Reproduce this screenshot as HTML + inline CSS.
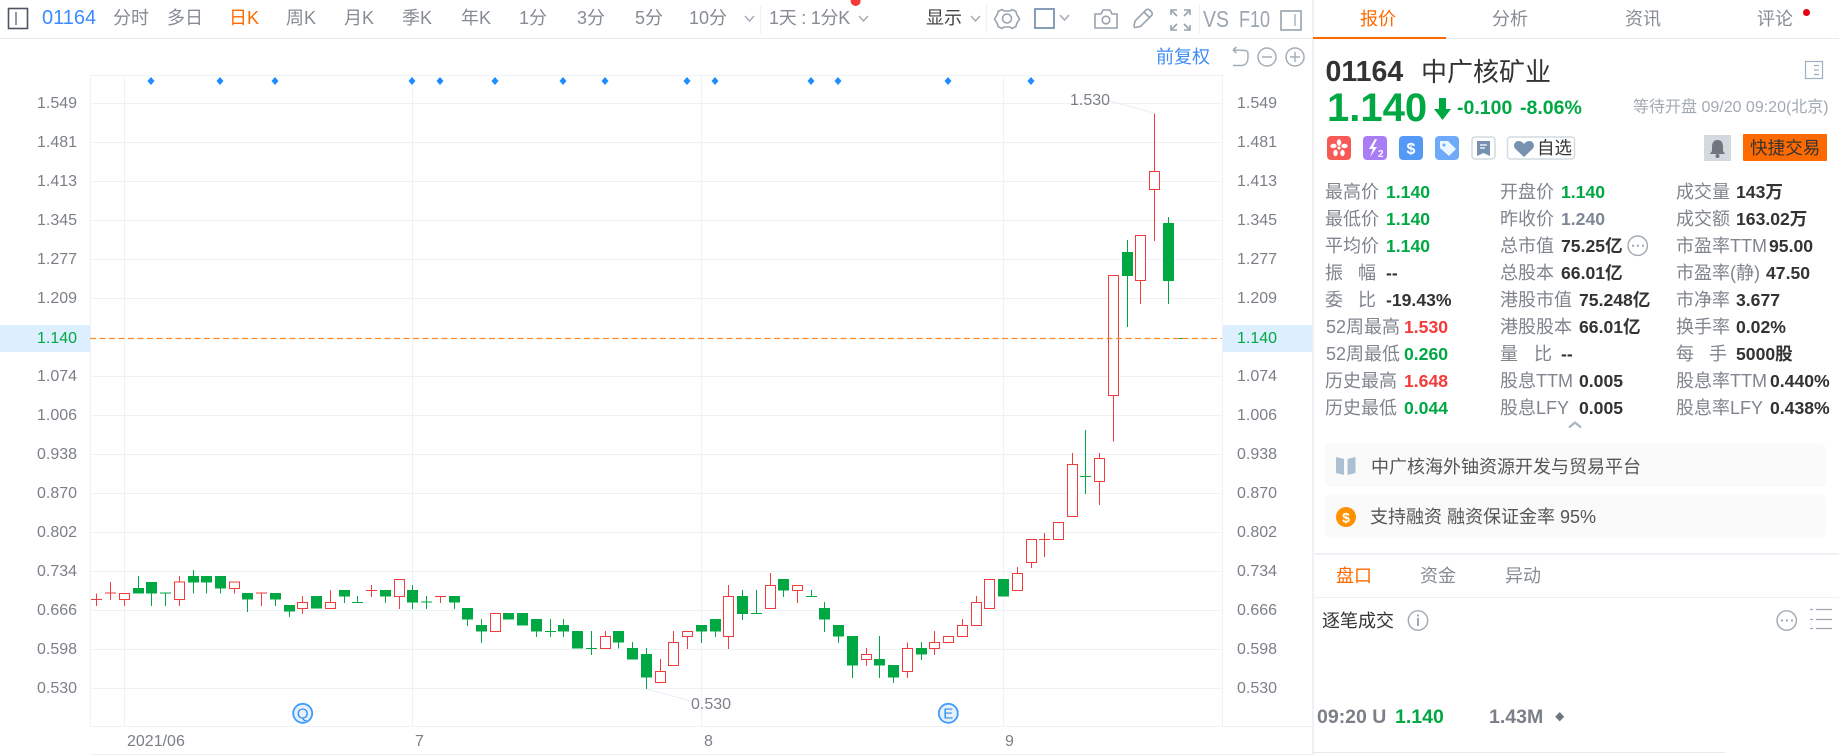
<!DOCTYPE html>
<html lang="zh"><head><meta charset="utf-8"><title>01164</title>
<style>
html,body{margin:0;padding:0;background:#fff;width:1839px;height:755px;overflow:hidden}
body{position:relative;font-family:"Liberation Sans","Noto Sans CJK SC",sans-serif;color:#333}
.t{position:absolute;white-space:nowrap;line-height:20px;font-size:18px}
.n{color:#868b94}.o{color:#ff6a00}.g{color:#00a843}.r{color:#f53a3a}
.a{font-size:16px;color:#7b7f87;margin-top:1px}
.l{color:#7f848d}.v{font-weight:bold;color:#333;font-size:17.6px}
.vg{font-weight:bold;color:#00a843;font-size:17.6px}.vr{font-weight:bold;color:#f53a3a;font-size:17.6px}
svg{position:absolute;left:0;top:0}
</style></head><body>

<svg width="1839" height="755" viewBox="0 0 1839 755" fill="none">
<!-- hilite bands -->
<rect x="0" y="325" width="90" height="27" fill="#ddeeff"/>
<rect x="1223" y="325" width="89" height="27" fill="#ddeeff"/>
<!-- structural lines -->
<g fill="#eef2f6" shape-rendering="crispEdges">
<rect x="0" y="38" width="1839" height="1" fill="#e6ebf0"/>
<rect x="90" y="75" width="1132" height="1"/>
<rect x="90" y="103" width="1132" height="1"/><rect x="90" y="142" width="1132" height="1"/>
<rect x="90" y="181" width="1132" height="1"/><rect x="90" y="220" width="1132" height="1"/>
<rect x="90" y="259" width="1132" height="1"/><rect x="90" y="298" width="1132" height="1"/>
<rect x="90" y="376" width="1132" height="1"/><rect x="90" y="415" width="1132" height="1"/>
<rect x="90" y="454" width="1132" height="1"/><rect x="90" y="493" width="1132" height="1"/>
<rect x="90" y="532" width="1132" height="1"/><rect x="90" y="571" width="1132" height="1"/>
<rect x="90" y="610" width="1132" height="1"/><rect x="90" y="649" width="1132" height="1"/>
<rect x="90" y="688" width="1132" height="1"/>
<rect x="90" y="726" width="1222" height="1"/><rect x="90" y="754" width="1222" height="1"/>
<rect x="90" y="75" width="1" height="652"/><rect x="124" y="75" width="1" height="652"/>
<rect x="412" y="75" width="1" height="652"/><rect x="701" y="75" width="1" height="652"/>
<rect x="1003" y="75" width="1" height="652"/><rect x="1222" y="75" width="1" height="652"/>
<rect x="1312" y="0" width="2" height="755"/>
<rect x="760" y="6" width="1" height="28"/><rect x="986" y="4" width="1" height="30"/><rect x="1199" y="4" width="1" height="30"/>
<rect x="1314" y="553" width="525" height="2"/><rect x="1314" y="597" width="525" height="1"/>
<rect x="1314" y="752" width="411" height="1" fill="#e6ebf0"/>
<rect x="1313" y="37" width="133" height="2" fill="#ff6a00"/>
</g>
<!-- leaders -->
<path d="M1110 101L1154 113M647 689L691 701" stroke="#e8edf3" stroke-width="1"/>

<!-- candles -->
<g shape-rendering="crispEdges">
<g transform="translate(90,530) scale(.33333)">
<path stroke="#00a843" stroke-width="3.4" d="M145 138V191M184 156V228M226 189V228M310 120V191M349 138V191M391 138V191M472 189V246M556 189V228M598 225V261M679 198V236M763 180V219M802 198V217M886 180V219M210 189h33M786 217h33"/>
<path stroke="#00a843" stroke-width="33" d="M145 174V191M184 156V191M310 138V158M349 138V158M391 138V176M472 189V209M556 189V209M598 225V245M679 198V236M763 180V200M886 180V200"/>
<path stroke="#f23b3b" stroke-width="3.4" d="M19 190V228M61 156V210M103 190V228M268 138V228M433 156V191M514 189V228M637 198V252M721 180V235M844 165V201M3 208h33M45 189h33M498 189h33M828 181h33"/>
<path stroke="#f23b3b" stroke-width="3.4" fill="#fff" d="M88 190h30v18h-30zM253 156h30v52h-30zM418 156h30v20h-30zM622 217h30v18h-30zM706 217h30v18h-30z"/>
</g>
<g transform="translate(380,530) scale(.33333)">
<path stroke="#00a843" stroke-width="3.4" d="M97 165V237M139 198V237M223 198V237M262 234V288M304 267V339M469 267V321M511 267V321M550 267V321M634 303V375M715 303V356M757 336V389M799 354V477M123 216h33M495 304h33M618 355h33"/>
<path stroke="#00a843" stroke-width="33" d="M97 180V218M223 198V218M262 234V269M304 285V305M385 249V269M427 249V287M469 267V305M550 285V305M592 303V356M715 303V338M757 354V389M799 372V443"/>
<path stroke="#f23b3b" stroke-width="3.4" d="M58 148V237M181 199V219M676 303V356M841 387V458M880 303V407M165 199h33"/>
<path stroke="#f23b3b" stroke-width="3.4" fill="#fff" d="M43 148h30v51h-30zM331 250h30v55h-30zM661 319h30v37h-30zM826 424h30v34h-30zM865 337h30v70h-30z"/>
</g>
<g transform="translate(670,530) scale(.33333)">
<path stroke="#00a843" stroke-width="3.4" d="M94 285V339M136 267V321M217 180V270M259 180V250M340 147V201M424 180V199M463 216V306M505 285V339M547 318V444M628 318V444M670 405V459M754 336V390M243 250h33M408 199h33"/>
<path stroke="#00a843" stroke-width="33" d="M94 285V305M136 267V305M217 198V252M340 147V182M463 234V269M505 285V320M547 318V407M628 387V407M670 405V443M754 354V374"/>
<path stroke="#f23b3b" stroke-width="3.4" d="M52 304V357M175 165V357M301 129V236M382 166V219M589 354V408M712 337V444M793 303V375M877 267V320"/>
<path stroke="#f23b3b" stroke-width="3.4" fill="#fff" d="M37 304h30v16h-30zM160 199h30v121h-30zM286 166h30v70h-30zM367 166h30v16h-30zM574 373h30v15h-30zM697 355h30v70h-30zM778 337h30v19h-30zM820 319h30v19h-30zM862 287h30v33h-30z"/>
</g>
<g transform="translate(960,380) scale(.33333)">
<path stroke="#00a843" stroke-width="3.4" d="M376 150V342M360 289h33"/>
<path stroke="#00a843" stroke-width="33" d="M130 597V650"/>
<path stroke="#f23b3b" stroke-width="3.4" d="M49 648V736M172 561V632M214 478V564M253 459V531M337 219V410M418 219V375M460 46V185M237 478h33"/>
<path stroke="#f23b3b" stroke-width="3.4" fill="#fff" d="M34 667h30v69h-30zM73 598h30v88h-30zM157 580h30v52h-30zM199 478h30v70h-30zM280 427h30v52h-30zM322 253h30v157h-30zM403 235h30v70h-30zM445 -314h30v360h-30z"/>
</g>
<g transform="translate(1040,90) scale(.33333)">
<path stroke="#00a843" stroke-width="3.4" d="M262 450V711M385 381V642M411 745h33"/>
<path stroke="#00a843" stroke-width="33" d="M262 486V558M385 399V573"/>
<path stroke="#f23b3b" stroke-width="3.4" d="M301 436V642M343 71V453"/>
<path stroke="#f23b3b" stroke-width="3.4" fill="#fff" d="M286 436h30v136h-30zM328 244h30v55h-30z"/>
</g>
</g>
<!-- dashed price line -->
<path d="M90 338.5H1222" stroke="#ff8a2a" stroke-width="1.2" stroke-dasharray="6 3.5"/>

<!-- blue diamonds -->
<g fill="#1e8cff">
<path d="M151 77l3.5 4-3.5 4-3.5-4zM220 77l3.5 4-3.5 4-3.5-4zM275 77l3.5 4-3.5 4-3.5-4zM412 77l3.5 4-3.5 4-3.5-4zM440 77l3.5 4-3.5 4-3.5-4zM495 77l3.5 4-3.5 4-3.5-4zM563 77l3.5 4-3.5 4-3.5-4zM605 77l3.5 4-3.5 4-3.5-4zM687 77l3.5 4-3.5 4-3.5-4zM715 77l3.5 4-3.5 4-3.5-4zM811 77l3.5 4-3.5 4-3.5-4zM838 77l3.5 4-3.5 4-3.5-4zM948 77l3.5 4-3.5 4-3.5-4zM1031 77l3.5 4-3.5 4-3.5-4z"/>
</g>

<!-- Q / E markers -->
<circle cx="302.7" cy="713.3" r="9.5" fill="#e6f0fb" stroke="#3d9cff" stroke-width="1.8"/>
<circle cx="948.3" cy="713.3" r="9.5" fill="#e6f0fb" stroke="#3d9cff" stroke-width="1.8"/>
<text x="302.7" y="718.500" text-anchor="middle" font-size="15" fill="#2f8ff0" font-family="Liberation Sans">Q</text>
<text x="948.3" y="718.500" text-anchor="middle" font-size="15" fill="#2f8ff0" font-family="Liberation Sans">E</text>

<!-- left toolbar icon -->
<rect x="8.5" y="8.5" width="19" height="20" fill="none" stroke="#4b5563" stroke-width="1.6"/>
<path d="M16 12v13" stroke="#4b5563" stroke-width="1.2"/>
<!-- chevrons -->
<g stroke="#a3acb7" stroke-width="1.5">
<path d="M745 16l4.5 5 4.5-5M859 16l4.5 5 4.5-5M971 16l4.5 5 4.5-5M1060 15l4.5 5 4.5-5"/>
</g>
<circle cx="855.6" cy="1" r="5" fill="#f53a3a"/>
<!-- gear -->
<g stroke="#97a3af" stroke-width="1.6" stroke-linejoin="round">
<path d="M1002 9.500l2 1.500h6l2-1.500 4 2 .5 2.500 3 5-1.500 2.500-1.500 2.500-.5 2.500-4 2-2-1.500h-6l-2 1.500-4-2-.5-2.500-3-5 3-5 .5-2.500z"/>
<circle cx="1007" cy="18.500" r="4.500"/>
</g>
<!-- square -->
<rect x="1035" y="9" width="19" height="19" stroke="#7a94b0" stroke-width="1.8"/>
<!-- camera -->
<g stroke="#97a3af" stroke-width="1.6">
<path d="M1095 14h6l2-4h7l2 4h5v14h-22z"/><circle cx="1106" cy="20" r="3.800"/>
</g>
<!-- pencil -->
<path d="M1134 26l1-5 11-11c1-1 2.500-1 3.500 0l2 2c1 1 1 2.500 0 3.500l-11 11-6 1zM1144 12l6 6" stroke="#97a3af" stroke-width="1.6"/>
<!-- fullscreen -->
<path d="M1171 15V10h6M1184 10h6v5M1171 25v5h6M1190 25v5h-6M1172 11l5 5M1189 11l-5 5M1172 29l5-5M1189 29l-5-5" stroke="#97a3af" stroke-width="1.6"/>
<!-- panel -->
<rect x="1281" y="11" width="20" height="19" stroke="#97a3af" stroke-width="1.6"/><path d="M1295 14v12" stroke="#97a3af" stroke-width="1.2"/>
<text x="1203" y="27" font-size="23" fill="#9aa5b1" textLength="26" lengthAdjust="spacingAndGlyphs" font-family="Liberation Sans">VS</text>
<text x="1239" y="27" font-size="23" fill="#9aa5b1" textLength="31" lengthAdjust="spacingAndGlyphs" font-family="Liberation Sans">F10</text>
<!-- undo / zoom -->
<g stroke="#a4adb8" stroke-width="1.5">
<path d="M1233 50l12 .5c3 1 3 .5 3 6.500s-3 8.500-7 8.500h-8M1233 50l3.500-3M1233 50l3.500 3"/>
<circle cx="1267" cy="57" r="9"/><path d="M1262 57h10"/>
<circle cx="1295" cy="57" r="9"/><path d="M1290 57h10M1295 52v10"/>
</g>

<!-- right panel icons -->
<rect x="1805.500" y="61.500" width="17" height="17" stroke="#9fb0c4" stroke-width="1.200"/><path d="M1814 65.500h5M1814 70h5M1814 74.500h5" stroke="#9fb0c4" stroke-width="1.200"/>
<path d="M1439 98h7v11h5l-8.500 11-8.500-11h5z" fill="#00a843"/>

<rect x="1327" y="136" width="24" height="24" rx="4" fill="#f75a55"/>
<g fill="#fff"><circle cx="1339" cy="148" r="1.600"/><ellipse cx="1339" cy="142.500" rx="2.200" ry="3.200"/><ellipse cx="1344.500" cy="146" rx="3.200" ry="2.200"/><ellipse cx="1342.500" cy="153" rx="2.200" ry="3.200"/><ellipse cx="1335.500" cy="153" rx="2.200" ry="3.200"/><ellipse cx="1333.500" cy="146" rx="3.200" ry="2.200"/></g>
<rect x="1363" y="136" width="24" height="24" rx="4" fill="#a97ef5"/>
<path d="M1375 139l-6 10h4l-3 8 7-10h-4l4-8z" fill="#fff"/>
<text x="1378" y="157" font-size="10" font-weight="bold" fill="#fff" font-family="Liberation Sans">2</text>
<rect x="1399" y="136" width="24" height="24" rx="4" fill="#5599f7"/>
<text x="1411" y="154" font-size="16" font-weight="bold" fill="#fff" text-anchor="middle" font-family="Liberation Sans">$</text>
<rect x="1435" y="136" width="24" height="24" rx="4" fill="#6fa9fa"/>
<path d="M1440 141h8l8 8-7 7-9-8zM1444 144" fill="#eaf7ff"/><circle cx="1444" cy="145" r="1.500" fill="#6fa9fa"/>
<rect x="1472" y="137" width="23" height="22" rx="3" fill="#fff" stroke="#d4dae1" stroke-width="1.500"/>
<path d="M1477 141h13v15l-6.500-3-6.500 3z" fill="#7792b0"/><path d="M1480 145h7M1480 148h5" stroke="#fff" stroke-width="1.300"/>
<rect x="1507.500" y="137" width="67" height="22" rx="3" fill="#fff" stroke="#d4dae1" stroke-width="1.500"/>
<path d="M1524 157l-8.500-8c-3-3-1-8 3-8 2.500 0 4.500 1.500 5.500 3 1-1.500 3-3 5.500-3 4 0 6 5 3 8z" fill="#7792b0"/>
<rect x="1704" y="135" width="27" height="26" fill="#d5d8dd"/>
<path d="M1717.500 140c-4 0-5.500 3-5.500 7v4l-2 3h15l-2-3v-4c0-4-1.500-7-5.500-7z" fill="#6f7680"/><circle cx="1717.500" cy="156" r="2" fill="#6f7680"/>
<rect x="1743" y="134" width="84" height="27" rx="1" fill="#ff6a00"/>
<path d="M1569 427.500l6-5 6 5" stroke="#a6b5c6" stroke-width="2.200"/>
<circle cx="1637.700" cy="245.700" r="9.700" stroke="#a0a8b3" stroke-width="1.400"/>
<path d="M1632 245.700h2M1637 245.700h2M1642 245.700h2" stroke="#a0a8b3" stroke-width="2"/>

<rect x="1325" y="443" width="501" height="44" rx="6" fill="#fafafb"/>
<rect x="1325" y="494" width="501" height="44" rx="6" fill="#fafafb"/>
<path d="M1336 457l8 2v16l-8-2zM1355.500 457l-8 2v16l8-2z" fill="#adbfd3"/>
<circle cx="1346" cy="517" r="10" fill="#ff9100"/>
<text x="1346" y="522.500" font-size="14" font-weight="bold" fill="#fff" text-anchor="middle" font-family="Liberation Sans">$</text>
<g stroke="#a0a8b3" stroke-width="1.400">
<circle cx="1418" cy="620.500" r="9.700"/><path d="M1418 618v8" stroke-width="2"/><path d="M1418 614.500v2" stroke-width="2"/>
<circle cx="1786.700" cy="620.500" r="9.700"/><path d="M1781 620.500h2M1786 620.500h2M1791 620.500h2" stroke-width="2"/>
<path d="M1810 609.500h3M1816 609.500h16M1810 619.500h3M1816 619.500h16M1810 628.500h3M1816 628.500h16" stroke-width="1.200"/>
</g>
<path d="M1559.700 712l4.500 4.700-4.500 4.700-4.500-4.700z" fill="#6f7680"/>
</svg>

<!-- Top bar -->
<span class="t" style="left:42px;top:8px;font-size:20px;color:#3b8cff">01164</span>
<span class="t n" style="left:113px;top:8px">分时</span>
<span class="t n" style="left:167px;top:8px">多日</span>
<span class="t o" style="left:229px;top:8px">日K</span>
<span class="t n" style="left:286px;top:8px">周K</span>
<span class="t n" style="left:344px;top:8px">月K</span>
<span class="t n" style="left:402px;top:8px">季K</span>
<span class="t n" style="left:461px;top:8px">年K</span>
<span class="t n" style="left:519px;top:8px">1分</span>
<span class="t n" style="left:577px;top:8px">3分</span>
<span class="t n" style="left:635px;top:8px">5分</span>
<span class="t n" style="left:689px;top:8px">10分</span>
<span class="t n" style="left:769px;top:8px;letter-spacing:-.25px">1天 : 1分K</span>
<span class="t" style="left:926px;top:8px;color:#444">显示</span>
<span class="t" style="left:1156px;top:47px;color:#3f8cf5">前复权</span>

<!-- Left axis -->
<span class="t a" style="left:37px;top:93px">1.549</span><span class="t a" style="left:37px;top:132px">1.481</span>
<span class="t a" style="left:37px;top:171px">1.413</span><span class="t a" style="left:37px;top:210px">1.345</span>
<span class="t a" style="left:37px;top:249px">1.277</span><span class="t a" style="left:37px;top:288px">1.209</span>
<span class="t a g" style="left:37px;top:328px;color:#00a843">1.140</span><span class="t a" style="left:37px;top:366px">1.074</span>
<span class="t a" style="left:37px;top:405px">1.006</span><span class="t a" style="left:37px;top:444px">0.938</span>
<span class="t a" style="left:37px;top:483px">0.870</span><span class="t a" style="left:37px;top:522px">0.802</span>
<span class="t a" style="left:37px;top:561px">0.734</span><span class="t a" style="left:37px;top:600px">0.666</span>
<span class="t a" style="left:37px;top:639px">0.598</span><span class="t a" style="left:37px;top:678px">0.530</span>
<!-- Right axis -->
<span class="t a" style="left:1237px;top:93px">1.549</span><span class="t a" style="left:1237px;top:132px">1.481</span>
<span class="t a" style="left:1237px;top:171px">1.413</span><span class="t a" style="left:1237px;top:210px">1.345</span>
<span class="t a" style="left:1237px;top:249px">1.277</span><span class="t a" style="left:1237px;top:288px">1.209</span>
<span class="t a g" style="left:1237px;top:328px;color:#00a843">1.140</span><span class="t a" style="left:1237px;top:366px">1.074</span>
<span class="t a" style="left:1237px;top:405px">1.006</span><span class="t a" style="left:1237px;top:444px">0.938</span>
<span class="t a" style="left:1237px;top:483px">0.870</span><span class="t a" style="left:1237px;top:522px">0.802</span>
<span class="t a" style="left:1237px;top:561px">0.734</span><span class="t a" style="left:1237px;top:600px">0.666</span>
<span class="t a" style="left:1237px;top:639px">0.598</span><span class="t a" style="left:1237px;top:678px">0.530</span>

<span class="t a" style="left:1070px;top:90px">1.530</span>
<span class="t a" style="left:691px;top:694px">0.530</span>
<span class="t a" style="left:127px;top:731px">2021/06</span>
<span class="t a" style="left:415px;top:731px">7</span>
<span class="t a" style="left:704px;top:731px">8</span>
<span class="t a" style="left:1005px;top:731px">9</span>

<!-- Right tabs -->
<span class="t o" style="left:1360px;top:9px">报价</span>
<span class="t n" style="left:1492px;top:9px">分析</span>
<span class="t n" style="left:1625px;top:9px">资讯</span>
<span class="t n" style="left:1757px;top:9px">评论</span>
<span style="position:absolute;left:1802.500px;top:9px;width:7px;height:7px;border-radius:50%;background:#e60012"></span>

<!-- Header -->
<span class="t" style="left:1325.500px;top:60px;font-size:28.500px;line-height:24px;font-weight:bold;color:#333">01164</span>
<span class="t" style="left:1421px;top:58px;font-size:26px;line-height:28px;color:#333">中广核矿业</span>
<span class="t" style="left:1327px;top:88px;font-size:40px;line-height:40px;font-weight:bold;color:#00a843">1.140</span>
<span class="t g" style="left:1457px;top:98px;font-size:19.500px;font-weight:bold">-0.100</span>
<span class="t g" style="left:1520px;top:98px;font-size:19.500px;font-weight:bold">-8.06%</span>
<span class="t" style="left:1633px;top:98px;font-size:16px;color:#a1a9b3">等待开盘 09/20 09:20(北京)</span>
<span class="t" style="left:1537px;top:138px;font-size:17.500px;color:#333">自选</span>
<span class="t" style="left:1750px;top:138px;font-size:17.600px;color:#333">快捷交易</span>

<!-- Stats col 1 -->
<span class="t l" style="left:1325px;top:182px">最高价</span><span class="t vg" style="left:1386px;top:182px">1.140</span>
<span class="t l" style="left:1325px;top:209px">最低价</span><span class="t vg" style="left:1386px;top:209px">1.140</span>
<span class="t l" style="left:1325px;top:236px">平均价</span><span class="t vg" style="left:1386px;top:236px">1.140</span>
<span class="t l" style="left:1325px;top:263px">振</span><span class="t l" style="left:1358px;top:263px">幅</span><span class="t v" style="left:1386px;top:263px">--</span>
<span class="t l" style="left:1325px;top:290px">委</span><span class="t l" style="left:1358px;top:290px">比</span><span class="t v" style="left:1386px;top:290px">-19.43%</span>
<span class="t l" style="left:1326px;top:317px">52周最高</span><span class="t vr" style="left:1404px;top:317px">1.530</span>
<span class="t l" style="left:1326px;top:344px">52周最低</span><span class="t vg" style="left:1404px;top:344px">0.260</span>
<span class="t l" style="left:1325px;top:371px">历史最高</span><span class="t vr" style="left:1404px;top:371px">1.648</span>
<span class="t l" style="left:1325px;top:398px">历史最低</span><span class="t vg" style="left:1404px;top:398px">0.044</span>
<!-- Stats col 2 -->
<span class="t l" style="left:1500px;top:182px">开盘价</span><span class="t vg" style="left:1561px;top:182px">1.140</span>
<span class="t l" style="left:1500px;top:209px">昨收价</span><span class="t v" style="left:1561px;top:209px;color:#7f8794">1.240</span>
<span class="t l" style="left:1500px;top:236px">总市值</span><span class="t v" style="left:1561px;top:236px">75.25亿</span>
<span class="t l" style="left:1500px;top:263px">总股本</span><span class="t v" style="left:1561px;top:263px">66.01亿</span>
<span class="t l" style="left:1500px;top:290px">港股市值</span><span class="t v" style="left:1579px;top:290px">75.248亿</span>
<span class="t l" style="left:1500px;top:317px">港股股本</span><span class="t v" style="left:1579px;top:317px">66.01亿</span>
<span class="t l" style="left:1500px;top:344px">量</span><span class="t l" style="left:1534px;top:344px">比</span><span class="t v" style="left:1561px;top:344px">--</span>
<span class="t l" style="left:1500px;top:371px">股息TTM</span><span class="t v" style="left:1579px;top:371px">0.005</span>
<span class="t l" style="left:1500px;top:398px">股息LFY</span><span class="t v" style="left:1579px;top:398px">0.005</span>
<!-- Stats col 3 -->
<span class="t l" style="left:1676px;top:182px">成交量</span><span class="t v" style="left:1736px;top:182px">143万</span>
<span class="t l" style="left:1676px;top:209px">成交额</span><span class="t v" style="left:1736px;top:209px">163.02万</span>
<span class="t l" style="left:1676px;top:236px">市盈率TTM</span><span class="t v" style="left:1769px;top:236px">95.00</span>
<span class="t l" style="left:1676px;top:263px">市盈率(静)</span><span class="t v" style="left:1766px;top:263px">47.50</span>
<span class="t l" style="left:1676px;top:290px">市净率</span><span class="t v" style="left:1736px;top:290px">3.677</span>
<span class="t l" style="left:1676px;top:317px">换手率</span><span class="t v" style="left:1736px;top:317px">0.02%</span>
<span class="t l" style="left:1676px;top:344px">每</span><span class="t l" style="left:1709px;top:344px">手</span><span class="t v" style="left:1736px;top:344px">5000股</span>
<span class="t l" style="left:1676px;top:371px">股息率TTM</span><span class="t v" style="left:1770px;top:371px">0.440%</span>
<span class="t l" style="left:1676px;top:398px">股息率LFY</span><span class="t v" style="left:1770px;top:398px">0.438%</span>

<!-- Lower -->
<span class="t" style="left:1371px;top:457px;color:#555">中广核海外铀资源开发与贸易平台</span>
<span class="t" style="left:1370px;top:507px;color:#555">支持融资 融资保证金率 95%</span>
<span class="t o" style="left:1336px;top:566px">盘口</span>
<span class="t n" style="left:1420px;top:566px">资金</span>
<span class="t n" style="left:1505px;top:566px">异动</span>
<span class="t" style="left:1322px;top:611px;color:#333">逐笔成交</span>
<span class="t" style="left:1317px;top:707px;font-size:19.500px;font-weight:bold;color:#7b7f87">09:20 U</span>
<span class="t g" style="left:1395px;top:707px;font-size:19.500px;font-weight:bold">1.140</span>
<span class="t" style="left:1489px;top:707px;font-size:19.500px;font-weight:bold;color:#7b7f87">1.43M</span>
</body></html>
